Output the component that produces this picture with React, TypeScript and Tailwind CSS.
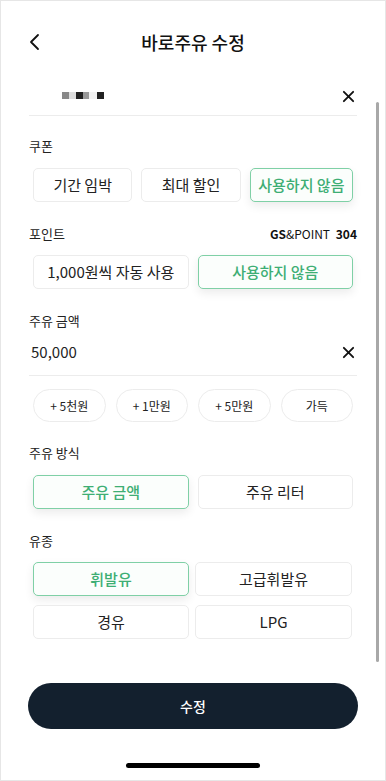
import React from 'react';

const font = { fontFamily: '"Noto Sans CJK KR", "Noto Sans", sans-serif' };

function XIcon() {
  return (
    <svg width="13" height="13" viewBox="0 0 14 14" fill="none" stroke="#111" strokeWidth="2" strokeLinecap="round">
      <path d="M2 2 L12 12 M12 2 L2 12" />
    </svg>
  );
}

function Label({ children }: { children: React.ReactNode }) {
  return <div className="text-[13px] leading-[18px] text-[#222]">{children}</div>;
}

function Choice({ label, active, className = '' }: { label: string; active?: boolean; className?: string }) {
  return (
    <button
      className={
        'h-[34px] rounded-[5px] border text-[15px] flex items-center justify-center ' +
        (active
          ? 'border-[#7fd0a6] text-[#3eae74] font-medium bg-[#fbfefc] shadow-[0_4px_10px_rgba(0,0,0,0.08)] '
          : 'border-[#ececec] text-[#222] bg-white ') +
        className
      }
    >
      {label}
    </button>
  );
}

export default function App() {
  return (
    <div style={font} className="relative w-[386px] h-[781px] bg-white border border-[#e6e6e6] overflow-hidden flex flex-col">
      {/* header */}
      <div className="relative h-7 mt-[27px] flex items-center justify-center">
        <svg className="absolute left-[27px]" width="14" height="20" viewBox="0 0 14 20" fill="none" stroke="#111" strokeWidth="1.8" strokeLinecap="round" strokeLinejoin="round">
          <path d="M10 3 L3 10 L10 17" />
        </svg>
        <h1 className="text-[18px] font-medium text-[#111]">바로주유 수정</h1>
      </div>

      <div className="px-[28px] flex flex-col">
        {/* card */}
        <div className="h-[38px] mt-[22px] flex items-center justify-between border-b border-[#ececec]">
          <div className="flex items-center ml-[33px] -mt-[2px]">
            <span className="w-[7px] h-[7px] bg-[#888]" />
            <span className="w-[7px] h-[7px] bg-[#ddd]" />
            <span className="w-[7px] h-[7px] bg-[#222]" />
            <span className="w-[6px] h-[7px] bg-[#999]" />
            <span className="w-[8px] h-[7px] bg-[#f2f2f2]" />
            <span className="w-[7px] h-[7px] bg-[#222]" />
          </div>
          <div className="mr-[2px]"><XIcon /></div>
        </div>

        {/* coupon */}
        <div className="mt-[21px]"><Label>쿠폰</Label></div>
        <div className="mt-[13px] flex gap-[9px] px-[4px]">
          <Choice label="기간 임박" className="w-[100px]" />
          <Choice label="최대 할인" className="w-[100px]" />
          <Choice label="사용하지 않음" active className="w-[104px]" />
        </div>

        {/* point */}
        <div className="mt-[23px] flex items-center justify-between">
          <Label>포인트</Label>
          <div className="text-[12px] text-[#111]">
            <span className="font-bold">GS</span>&amp;POINT <span className="font-bold ml-[3px]">304</span>
          </div>
        </div>
        <div className="mt-[12px] flex gap-[9px] px-[4px]">
          <Choice label="1,000원씩 자동 사용" className="flex-1" />
          <Choice label="사용하지 않음" active className="flex-1" />
        </div>

        {/* amount */}
        <div className="mt-[23px]"><Label>주유 금액</Label></div>
        <div className="h-[46px] flex items-center justify-between border-b border-[#ececec]">
          <span className="text-[15px] text-[#222] ml-[2px] -mt-[1px]">50,000</span>
          <div className="mr-[2px]"><XIcon /></div>
        </div>
        <div className="mt-[13px] flex gap-[10px] px-[4px]">
          {['+ 5천원', '+ 1만원', '+ 5만원', '가득'].map((t) => (
            <button key={t} className="flex-1 h-[33px] rounded-full border border-[#ececec] text-[12px] text-[#222]">
              {t}
            </button>
          ))}
        </div>

        {/* method */}
        <div className="mt-[22px]"><Label>주유 방식</Label></div>
        <div className="mt-[13px] flex gap-[9px] px-[4px]">
          <Choice label="주유 금액" active className="flex-1" />
          <Choice label="주유 리터" className="flex-1" />
        </div>

        {/* fuel */}
        <div className="mt-[23px]"><Label>유종</Label></div>
        <div className="mt-[12px] grid grid-cols-[156px_157px] gap-x-[6px] gap-y-[9px] px-[4px]">
          <Choice label="휘발유" active />
          <Choice label="고급휘발유" />
          <Choice label="경유" />
          <Choice label="LPG" />
        </div>
      </div>

      {/* submit */}
      <div className="mt-[44px] px-[27px]">
        <button className="w-full h-[46px] rounded-full bg-[#13202e] text-white text-[14px] font-medium">수정</button>
      </div>

      <div className="mt-auto mb-[12px] flex justify-center">
        <div className="w-[134px] h-[5px] rounded-full bg-black" />
      </div>

      {/* scrollbar */}
      <div className="absolute left-[375px] top-[101px] w-[3px] h-[560px] rounded-full bg-[#a8a8a8]" />
    </div>
  );
}
